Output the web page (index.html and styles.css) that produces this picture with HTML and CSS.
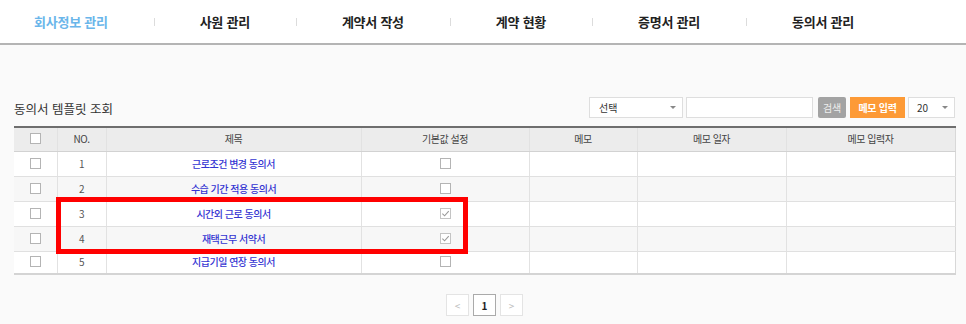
FILE: index.html
```html
<!DOCTYPE html>
<html lang="ko">
<head>
<meta charset="utf-8">
<title>동의서 템플릿 조회</title>
<link rel="stylesheet" href="styles.css">
</head>
<body>
<header class="gnb">
  <nav class="menu">
    <a class="menu-item active">회사정보 관리</a>
    <a class="menu-item">사원 관리</a>
    <a class="menu-item">계약서 작성</a>
    <a class="menu-item">계약 현황</a>
    <a class="menu-item">증명서 관리</a>
    <a class="menu-item">동의서 관리</a>
  </nav>
</header>
<main class="content">
  <div class="toolbar">
    <h2 class="page-title">동의서 템플릿 조회</h2>
    <div class="controls">
      <div class="select sel-type"><span>선택</span><i class="caret"></i></div>
      <div class="text-input"></div>
      <button class="btn btn-search">검색</button>
      <button class="btn btn-memo">메모 입력</button>
      <div class="select sel-size"><span>20</span><i class="caret"></i></div>
    </div>
  </div>
  <div class="table-wrap">
    <table class="grid">
      <colgroup>
        <col class="c-chk"><col class="c-no"><col class="c-title"><col class="c-def"><col class="c-memo"><col class="c-date"><col class="c-writer">
      </colgroup>
      <thead>
        <tr>
          <th><span class="cb"></span></th>
          <th>NO.</th>
          <th>제목</th>
          <th>기본값 설정</th>
          <th>메모</th>
          <th>메모 일자</th>
          <th>메모 입력자</th>
        </tr>
      </thead>
      <tbody>
        <tr>
          <td><span class="cb"></span></td><td class="num">1</td><td class="link">근로조건 변경 동의서</td><td><span class="cb"></span></td><td></td><td></td><td></td>
        </tr>
        <tr>
          <td><span class="cb"></span></td><td class="num">2</td><td class="link">수습 기간 적용 동의서</td><td><span class="cb"></span></td><td></td><td></td><td></td>
        </tr>
        <tr>
          <td><span class="cb"></span></td><td class="num">3</td><td class="link">시간외 근로 동의서</td><td><span class="cb checked"><svg viewBox="0 0 10 10" width="9" height="9"><path d="M1.5 5.2 L4 7.6 L8.6 2.4" fill="none" stroke="#9a9a9a" stroke-width="1.2"/></svg></span></td><td></td><td></td><td></td>
        </tr>
        <tr>
          <td><span class="cb"></span></td><td class="num">4</td><td class="link">재택근무 서약서</td><td><span class="cb checked"><svg viewBox="0 0 10 10" width="9" height="9"><path d="M1.5 5.2 L4 7.6 L8.6 2.4" fill="none" stroke="#9a9a9a" stroke-width="1.2"/></svg></span></td><td></td><td></td><td></td>
        </tr>
        <tr>
          <td><span class="cb"></span></td><td class="num">5</td><td class="link">지급기일 연장 동의서</td><td><span class="cb"></span></td><td></td><td></td><td></td>
        </tr>
      </tbody>
    </table>
    <div class="highlight"></div>
  </div>
  <div class="pager">
    <a class="page-btn dim">&lt;</a>
    <a class="page-btn current">1</a>
    <a class="page-btn dim">&gt;</a>
  </div>
</main>
</body>
</html>
```
FILE: styles.css
```css
* { box-sizing: border-box; }
html, body { margin: 0; padding: 0; }
body {
  width: 966px;
  height: 324px;
  overflow: hidden;
  background: #fafafa;
  font-family: "Noto Sans CJK KR", "Noto Sans", sans-serif;
  color: #333;
}
.gnb {
  height: 45px;
  background: #fff;
  border-bottom: 2px solid #b4b4b4;
}
.menu {
  display: flex;
  align-items: center;
  height: 43px;
  padding-left: 34px;
}
.menu-item {
  position: relative;
  font-size: 13px;
  font-weight: 700;
  letter-spacing: -0.25px;
  color: #222;
  padding: 0 46px;
  line-height: 43px;
  white-space: nowrap;
}
.menu-item:first-child { padding-left: 0; }
.menu-item + .menu-item::before {
  content: "";
  position: absolute;
  left: 0;
  top: 18px;
  width: 1px;
  height: 8px;
  background: #dcdcdc;
}
.menu-item.active { color: #6ab6ea; }

.content { padding: 52px 11px 0 14px; }
.toolbar {
  display: flex;
  justify-content: space-between;
  align-items: center;
  height: 21px;
  margin-bottom: 8px;
}
.page-title {
  margin: 0;
  font-size: 12.5px;
  font-weight: 400;
  color: #333;
  letter-spacing: 0;
  padding-top: 2px;
}
.controls { display: flex; align-items: center; }
.select, .text-input {
  height: 21px;
  background: #fff;
  border: 1px solid #dedede;
}
.select {
  display: flex;
  align-items: center;
  justify-content: space-between;
  font-size: 10px;
  color: #333;
  padding: 0 6px 0 9px;
}
.sel-type { width: 94px; margin-right: 3px; }
.text-input { width: 127px; margin-right: 5px; }
.sel-size { width: 47px; margin-left: 3px; padding-left: 8px; }
.caret {
  width: 0; height: 0;
  border-left: 3px solid transparent;
  border-right: 3px solid transparent;
  border-top: 3px solid #888;
}
.btn {
  height: 21px;
  border: 0;
  border-radius: 2px;
  font-family: inherit;
  font-size: 10px;
  letter-spacing: -0.3px;
  color: #fff;
  padding: 0;
}
.btn-search { width: 28px; background: #a3a3a3; margin-right: 4px; color: #eee; }
.btn-memo { width: 55px; background: #fd9a36; font-weight: 700; border-radius: 0; }

.table-wrap { position: relative; }
.grid {
  width: 941px;
  border-collapse: collapse;
  table-layout: fixed;
  border-top: 2px solid #6e6e6e;
  border-bottom: 2px solid #d4d4d4;
  border-right: 1px solid #d8d8d8;
}
.c-chk { width: 43px; }
.c-no { width: 49px; }
.c-title { width: 255px; }
.c-def { width: 168px; }
.c-memo { width: 108px; }
.c-date { width: 149px; }
.c-writer { width: 169px; }
.grid th, .grid td {
  height: 25px;
  padding: 0;
  text-align: center;
  vertical-align: middle;
  border-left: 1px solid #e2e2e2;
  border-bottom: 1px solid #e0e0e0;
  font-size: 10px;
  letter-spacing: -0.5px;
  line-height: 1;
}
.grid th { height: 24px; }
.grid th:first-child, .grid td:first-child { border-left: 0; }
.grid th {
  background: #ececec;
  color: #444;
  font-weight: 400;
  border-bottom: 1px solid #d2d2d2;
}
.grid tbody tr { background: #fff; }
.grid tbody tr:nth-child(even) { background: #f7f7f7; }
.grid tbody tr:last-child td { height: 23px; border-bottom: 0; }
.num { color: #555; }
.link {
  color: #3434d2;
  font-weight: 500;
  letter-spacing: -0.7px;
}
.cb {
  display: inline-flex;
  align-items: center;
  justify-content: center;
  width: 11px;
  height: 11px;
  border: 1px solid #b4b4b4;
  background: #fff;
  vertical-align: middle;
  margin-top: -3px;
}
.cb.checked { border-color: #c4c4c4; }
.highlight {
  position: absolute;
  left: 42px;
  top: 71px;
  width: 412px;
  height: 57px;
  border: 5px solid #ff0000;
  pointer-events: none;
}
.pager {
  display: flex;
  justify-content: center;
  gap: 4px;
  margin-top: 19px;
  width: 941px;
}
.page-btn {
  display: flex;
  align-items: center;
  justify-content: center;
  width: 23px;
  height: 22px;
  border: 1px solid #e4e4e4;
  background: #fff;
  font-size: 10px;
  color: #bbb;
}
.page-btn.current {
  border-color: #aaa;
  color: #222;
  font-weight: 700;
}
```
